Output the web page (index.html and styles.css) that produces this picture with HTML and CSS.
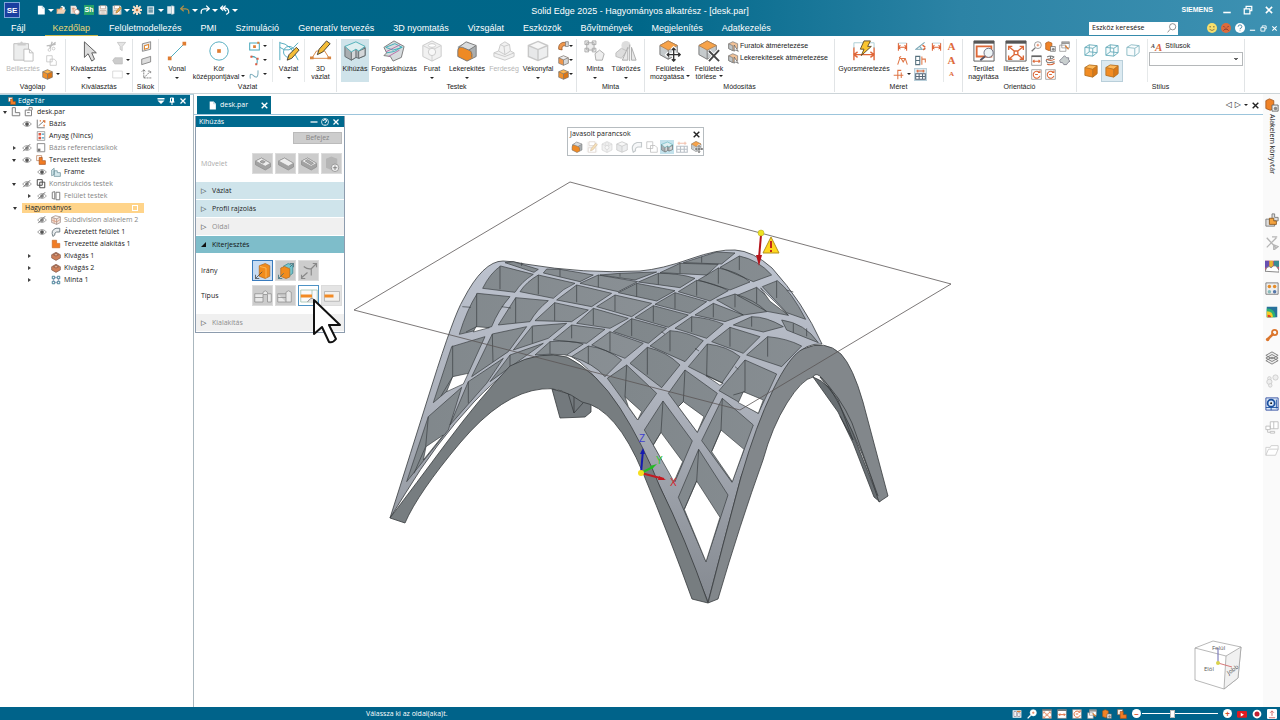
FILE: index.html
```html
<!DOCTYPE html>
<html lang="hu">
<head>
<meta charset="utf-8">
<title>Solid Edge 2025 - Hagyományos alkatrész - [desk.par]</title>
<link rel="stylesheet" href="styles.css">
</head>
<body>
<svg class="defs" aria-hidden="true">
<symbol id="cube" viewBox="0 0 16 16"><path d="M8 1l7 3v8l-7 3-7-3V4z" class="f2"/><path d="M8 1l7 3-7 3-7-3z" class="f1"/><path d="M8 7l7-3v8l-7 3z" class="f3"/><path d="M8 1l7 3v8l-7 3-7-3V4zM1 4l7 3 7-3M8 7v8" class="ln"/></symbol>
<symbol id="hole" viewBox="0 0 24 24"><path d="M12 1l10 5v12l-10 5-10-5V6z" fill="#ddd" stroke="#777"/><path d="M2 6l10 5 10-5M12 11v12" fill="none" stroke="#888"/><ellipse cx="12" cy="6" rx="4" ry="2" fill="#fff" stroke="#777"/><circle cx="12" cy="13" r="4" fill="#eee" stroke="#777"/></symbol>
<symbol id="draft" viewBox="0 0 24 24"><path d="M1 14l5-2 2-7 5-3 5 3 1 7 4 2v4l-10 4-12-4z" fill="#ddd" stroke="#777"/><path d="M8 5l4 2 6-2M12 7l1 9M1 14l12 4 10-4M6 12l7 4 6-4" fill="none" stroke="#777"/></symbol>
<symbol id="round" viewBox="0 0 24 24"><path d="M2 7l10-5 10 5v11l-10 5-10-5z" fill="#a9aeb1"/><path d="M2 18V12q0-5 5-4l7 3q4 1 4 6v3l-6 3z" fill="#ee8a25"/><path d="M3 8l8-6 11 4-7 4q-2 1-8-2-2-1-4 0z" fill="#d9dcde"/><path d="M3 8l8-6 11 4v12l-10 5-10-5v-6q0-5 5-4l7 3q4 1 3 8M14 11l8-5" class="ln"/></symbol>
<symbol id="extr" viewBox="0 0 24 24"><path d="M1 7v11l7 4 5-3 3 1 7-3V8z" fill="#a9aeb1" stroke="#60686b"/><path d="M8 12l5-2v9l-5 3zM16 12l7-3v8l-7 3z" fill="#d4d7d9" stroke="#60686b"/><path d="M1 7l12-5 10 5-7 5-3-2-5 3z" fill="#dfeef0" stroke="#49aeb7"/></symbol>
<symbol id="revolve" viewBox="0 0 24 24"><path d="M1 8L12 1l11 6-3 12-9 4-3-5-7-1 3-3z" fill="#d6dbde" stroke="#777"/><path d="M3 8l10-4 8 4-10 3zM4 14q9 0 16-6" fill="none" stroke="#38adb8"/><path d="M6 18L18 11M3 13l16-8" fill="none" stroke="#b66aa5"/></symbol>
<symbol id="page" viewBox="0 0 16 16"><path d="M3 1h7l4 4v10H3z" fill="#fff"/><path d="M10 1v4h4" fill="none" stroke="#9bc"/></symbol>
<symbol id="folder" viewBox="0 0 16 16"><path d="M1 14V6h5l1-2h6v4" fill="#eaa978"/><path d="M1 14l3-7h12l-3 7z" fill="#f0d0b4"/><path d="M7 3q4-4 6 1l1-2v5H9l2-2Q10 2 7 3" fill="#fff"/></symbol>
<symbol id="pages" viewBox="0 0 16 16"><path d="M1 1h8l2 3v10H1z" fill="#eee4dc"/><path d="M5 4v8M3 6h5" stroke="#c87452"/><circle cx="11" cy="11" r="4" fill="#fff" stroke="#ba7861"/></symbol>
<symbol id="save" viewBox="0 0 16 16"><path d="M1 1h13l1 2v12H1z" fill="#e8e6e3"/><path d="M4 1h8v5H4zM3 9h10v6H3z" fill="#fff" stroke="#ae9787"/><path d="M5 11h6M5 13h6" stroke="#ae9787"/></symbol>
<symbol id="saveas" viewBox="0 0 16 16"><path d="M1 1h13l1 2v12H1z" fill="#e8e6e3"/><path d="M4 1h8v5H4zM3 9h10v6H3z" fill="#fff" stroke="#ae9787"/><path d="M6 13l1-3 6-7 2 2-6 7z" fill="#eeb64a" stroke="#9c6a2c"/></symbol>
<symbol id="gear" viewBox="0 0 16 16"><path d="M8 0v16M0 8h16M2 2l12 12M14 2L2 14" stroke="#f3ddc7" stroke-width="3"/><circle cx="8" cy="8" r="5" fill="#f3ddc7"/><circle cx="8" cy="8" r="2" fill="#c67741"/></symbol>
<symbol id="doc" viewBox="0 0 16 16"><path d="M2 2h11v13H2z" fill="#dce8ec"/><path d="M4 5h7M4 8h7M4 11h7" stroke="#437f96" stroke-width="2"/></symbol>
<symbol id="exit" viewBox="0 0 16 16"><path d="M2 2h7v12H2z" fill="#dce8ec"/><path d="M9 1l4 1v12l-4 1z" fill="#fff" stroke="#a8bcc4"/></symbol>
<symbol id="undo" viewBox="0 0 16 16"><path d="M6 1L1 6l5 4M1 6h8q6 0 5 8" fill="none" stroke="currentColor" stroke-width="2"/></symbol>
<symbol id="undo2" viewBox="0 0 16 16"><path d="M5 1L1 5l4 4M1 5h8q5 1 5 7l-4 3M9 1L5 5l5 5" fill="none" stroke="currentColor" stroke-width="2"/></symbol>
<symbol id="paste" viewBox="0 0 24 24"><path d="M2 4h16v18H2z" fill="#eceded" stroke="#bbb"/><path d="M6 5V3h3q1-3 3 0h3v3H6z" fill="#ccc"/><path d="M13 10h6l4 4v9H13z" fill="#fff" stroke="#bbb"/><path d="M19 10v4h4" fill="none" stroke="#bbb"/></symbol>
<symbol id="cut" viewBox="0 0 16 16"><path d="M9 1L6 11M1 7l13-2M14 2L5 9" stroke="#bbb" stroke-width="2"/><circle cx="5" cy="13" r="2" fill="none" stroke="#bbb"/><circle cx="11" cy="11" r="2" fill="none" stroke="#bbb"/></symbol>
<symbol id="copy" viewBox="0 0 16 16"><path d="M1 1h8v9H1zM6 6h6l3 3v6H6z" fill="#fff" stroke="#bbb"/></symbol>
<symbol id="arrow" viewBox="0 0 24 24"><path d="M7 2v17l4-4 4 8 3-2-3-7h5z" fill="#ddd" stroke="#555"/></symbol>
<symbol id="funnel" viewBox="0 0 16 16"><path d="M2 2h12l-5 6v6l-3-2V8z" fill="#e4e4e4" stroke="#bbb"/></symbol>
<symbol id="tag" viewBox="0 0 16 16"><path d="M1 8l3-4h11v9H4z" fill="#ccc" stroke="#bbb"/></symbol>
<symbol id="rect" viewBox="0 0 16 16"><path d="M1 3h14v10H1z" fill="#fff" stroke="#ccc"/></symbol>
<symbol id="planeO" viewBox="0 0 16 16"><path d="M2 4l12-3v11L2 15z" fill="#e8e8e8" stroke="#666"/><path d="M5 7l6-2v5l-6 2z" fill="#fff" stroke="#df8730" stroke-width="1.5"/></symbol>
<symbol id="plane" viewBox="0 0 16 16"><path d="M1 14V6l13-4v8z" fill="#ddd" stroke="#666"/></symbol>
<symbol id="axes" viewBox="0 0 16 16"><path d="M4 1v12h11M4 13l9-9M1 4l3-3 3 3M10 3h4v4" fill="none" stroke="#555" stroke-dasharray="3 1"/></symbol>
<symbol id="line" viewBox="0 0 24 24"><path d="M3 21L21 3" stroke="#3fa5ba"/><path d="M2 18h4v4H2zM18 2h4v4h-4z" fill="#df7d32"/></symbol>
<symbol id="circle" viewBox="0 0 24 24"><circle cx="12" cy="12" r="10" fill="#fff" stroke="#4ba9bc"/><path d="M10 10h4v4h-4z" fill="#df7d32"/></symbol>
<symbol id="sqdot" viewBox="0 0 16 16"><path d="M1 3h14v10H1z" fill="none" stroke="#4ba9bc" stroke-width="1.5"/><path d="M6 6h4v4H6zM12 1h3v3h-3z" fill="#df7d32"/></symbol>
<symbol id="arc" viewBox="0 0 16 16"><path d="M3 2q12 0 8 12" fill="none" stroke="#4ba9bc" stroke-width="1.5"/><path d="M2 1h3v3H2zM9 12h3v3H9zM11 4h3v3h-3z" fill="#df5d42"/></symbol>
<symbol id="curve" viewBox="0 0 16 16"><path d="M2 14q-2-10 5-4t6-8" fill="none" stroke="#7badbc" stroke-width="1.5"/></symbol>
<symbol id="sketch" viewBox="0 0 24 24"><path d="M2 2v20M2 3q12 1 20 19M2 8q10 8 20-5" fill="none" stroke="#4ba9bc"/><circle cx="12" cy="13" r="6" fill="none" stroke="#4ba9bc"/><path d="M10 22l2-6 8-8 3 3-8 9z" fill="#f4bd38" stroke="#423b2e"/></symbol>
<symbol id="sketch3" viewBox="0 0 24 24"><path d="M2 20l5-8h9l5 8z" fill="none" stroke="#d68440"/><path d="M8 16l2-6 8-9 4 3-8 9z" fill="#f4bd38" stroke="#423b2e"/><path d="M0 18h4v3H0zM19 18h4v3h-4z" fill="#d68440"/></symbol>
<symbol id="loft" viewBox="0 0 16 16"><path d="M1 12q-1-8 6-10h5v5H9q-4 0-3 6z" fill="#ef974c" stroke="#864415"/><path d="M11 1h4v7h-4z" fill="#ddd" stroke="#777"/></symbol>
<symbol id="pattern" viewBox="0 0 24 24"><path d="M3 3h8v8H3zM1 1h4v4H1zM9 1h4v4H9zM1 9h4v4H1zM9 9h4v4H9zM17 11l5 4-2 7h-7l-1-7z" fill="#eee" stroke="#aaa"/></symbol>
<symbol id="mirror" viewBox="0 0 24 24"><circle cx="12" cy="6" r="5" fill="#ddd"/><path d="M1 14l6-5 6 3-6 8-6-2z" fill="#ddd" stroke="#bbb"/><path d="M16 5v18M14 8l-6 14h6zM18 8l5 14h-5z" fill="#e8e8e8" stroke="#aaa"/></symbol>
<symbol id="cubemove" viewBox="0 0 24 24"><path d="M1 6l9-5 10 5v10l-10 5-9-5z" fill="#c5cacc" stroke="#777"/><path d="M1 6l9-5 10 5-10 5z" fill="#f7a34a" stroke="#b9824b"/><path d="M10 11v10" stroke="#777"/><path d="M16 9v14M9 16h14M14 11l2-2 2 2M14 21l2 2 2-2M11 14l-2 2 2 2M21 14l2 2-2 2" fill="none" stroke="#fff" stroke-width="4"/><path d="M16 9v14M9 16h14M14 11l2-2 2 2M14 21l2 2 2-2M11 14l-2 2 2 2M21 14l2 2-2 2" fill="none" stroke="#333" stroke-width="1.5"/></symbol>
<symbol id="cubedel" viewBox="0 0 24 24"><path d="M1 6l9-5 10 5v10l-10 5-9-5z" fill="#c5cacc" stroke="#777"/><path d="M1 6l9-5 10 5-10 5z" fill="#f7a34a" stroke="#b9824b"/><path d="M10 11v10" stroke="#777"/><path d="M12 12l11 11M23 11L12 23" stroke="#fff" stroke-width="4"/><path d="M12 12l11 11M23 11L12 23" stroke="#444" stroke-width="2"/></symbol>
<symbol id="cubesize" viewBox="0 0 16 16"><path d="M1 4l6-3 7 3v7l-7 3-6-3z" fill="#f0c197" stroke="#777"/><path d="M1 4l6 3v7l-6-3z" fill="#bfc4c6" stroke="#777"/><path d="M9 6v9l2-2 4 2z" fill="#fff" stroke="#555"/></symbol>
<symbol id="dim" viewBox="0 0 24 24"><path d="M1 8v14M23 8v14M1 16h22M5 13l-4 3 4 3M19 13l4 3-4 3" fill="none" stroke="#df6537" stroke-width="1.5"/><path d="M1 9V3h22v6" fill="none" stroke="#a8ccd2"/><path d="M12 1h7l-3 6h4L9 17l3-7H8z" fill="#fbc52f" stroke="#604a26"/></symbol>
<symbol id="dimS" viewBox="0 0 16 16"><path d="M2 3v11M14 3v11M2 9h12M5 6L2 9l3 3M11 6l3 3-3 3" fill="none" stroke="#df6537" stroke-width="1.5"/><path d="M2 3h12" stroke="#9bc3ce"/></symbol>
<symbol id="angle" viewBox="0 0 16 16"><path d="M14 2L1 12h14M6 8q4 1 3 5" fill="none" stroke="#78a6b5" stroke-width="1.5"/><path d="M11 6l4 3M12 13l3-3" stroke="#df6537" stroke-width="2"/></symbol>
<symbol id="angle2" viewBox="0 0 16 16"><path d="M1 14L4 5l8 0 3 9M3 4l3-2M6 5l3 5 3-5" fill="none" stroke="#df7545" stroke-width="1.5"/></symbol>
<symbol id="ord" viewBox="0 0 16 16"><path d="M1 9h14M7 9V2h5M7 9v6M12 5v8" fill="none" stroke="#df7545" stroke-width="1.5"/></symbol>
<symbol id="hdim" viewBox="0 0 16 16"><path d="M1 2h6v12H1zM1 8h6" fill="none" stroke="#56707e" stroke-width="1.5"/><path d="M10 2v12M10 6h5v5" fill="none" stroke="#df7545" stroke-width="1.5"/></symbol>
<symbol id="table" viewBox="0 0 16 16"><path d="M1 7h14v8H1zM6 7v8M11 7v8M1 11h14" fill="#fff" stroke="#567" stroke-width="1.5"/><path d="M2 3h12M4 1v4M12 1v4" stroke="#df6537" stroke-width="1.5"/></symbol>
<symbol id="frame" viewBox="0 0 24 24"><path d="M1 1h22v22H1z" fill="#fff" stroke="#555"/><path d="M1 1h22v3H1z" fill="#555"/><path d="M4 7h16v11H4z" fill="none" stroke="#dd6837" stroke-width="2"/><circle cx="17" cy="14" r="5" fill="#edf4f6" stroke="#667"/><path d="M13 18l-5 4" stroke="#556" stroke-width="2"/></symbol>
<symbol id="fit" viewBox="0 0 24 24"><path d="M1 1h22v22H1z" fill="#fff" stroke="#555"/><path d="M1 1h22v3H1z" fill="#555"/><path d="M4 11V7h4M16 7h4v4M4 17v4h4M20 17v4h-4M4 7l6 5M20 7l-6 5M4 21l6-5M20 21l-6-5M10 12h4v4h-4z" fill="none" stroke="#dd6837" stroke-width="1.5"/></symbol>
<symbol id="lens" viewBox="0 0 16 16"><circle cx="10" cy="6" r="5" fill="#fff" stroke="currentColor"/><path d="M6 10l-5 5" stroke="currentColor" stroke-width="2"/><path d="M8 6h4M10 4v4" class="orange"/></symbol>
<symbol id="search" viewBox="0 0 16 16"><circle cx="9" cy="6" r="5" fill="none" stroke="#555"/><path d="M5 10l-4 5" stroke="#555"/></symbol>
<symbol id="win" viewBox="0 0 16 16"><path d="M1 1h14v14H1z" fill="#fff" stroke="#777"/><path d="M1 2h14" stroke="#666" stroke-width="2"/><path d="M3 9h10M5 7L3 9l2 2M11 7l2 2-2 2" fill="none" stroke="#dd6837" stroke-width="1.5"/></symbol>
<symbol id="spin" viewBox="0 0 16 16"><path d="M3 3q5-3 10 0-2 3-7 3t-4 3 6 2 6-1M8 1v4" fill="none" stroke="#777" stroke-width="1.5"/><path d="M2 6q6 4 12 0M3 13q5 3 11-1" fill="none" stroke="#d9683b" stroke-width="1.5"/></symbol>
<symbol id="pan" viewBox="0 0 16 16"><path d="M8 1l3 3h3v3l2 2-3 2-2 3H7l-2-3H2L1 8l3-3z" fill="#c9cfcf" stroke="#667"/></symbol>
<symbol id="rot" viewBox="0 0 16 16"><path d="M1 1h14v14H1z" fill="#fff" stroke="#888"/><path d="M12 5a5 5 0 1 0 1 5M10 5h3V2M6 8h4" fill="none" stroke="#dd6837" stroke-width="1.5"/></symbol>
<symbol id="wins" viewBox="0 0 16 16"><path d="M4 1h11v9H4zM1 6h9v9H1z" fill="#fff" stroke="#888"/><path d="M4 3h11" stroke="#777" stroke-width="2"/><path d="M9 7l5 5" stroke="#dd8037" stroke-width="2"/></symbol>
<symbol id="split" viewBox="0 0 16 16"><path d="M1 2h14v12H1z" fill="#fff"/><path d="M3 4h4v8H3zM9 6h4v6H9z" fill="none" stroke="#778"/><path d="M8 4h6" stroke="#dd8037" stroke-width="2"/></symbol>
<symbol id="wire" viewBox="0 0 16 16"><path d="M1 5l5-3 9 1v8l-5 4-9-1zM1 5l9 1 5-3M10 6v9" fill="#f8fcfd" stroke="#87b8c4"/></symbol>
<symbol id="wire2" viewBox="0 0 16 16"><path d="M1 5l5-3 9 1v8l-5 4-9-1zM1 5l9 1 5-3M10 6v9M6 2v8l9 1M1 14l5-4" fill="#f5fbfc" stroke="#62a9b8"/></symbol>
<symbol id="solid" viewBox="0 0 16 16"><path d="M1 4l5-3 9 1v9l-5 4-9-2z" fill="#f28c22"/><path d="M1 4l5-3 9 1-5 4z" fill="#ffb959"/><path d="M10 6l5-4v9l-5 4z" fill="#dc7915"/><path class="rim" d="M1 4l5-3 9 1v9l-5 4-9-2zM1 4l9 2 5-4M10 6v9" fill="none"/></symbol>
<symbol id="eye" viewBox="0 0 16 16"><path d="M1 8q7-8 14 0-7 8-14 0z" fill="#fff" stroke="#666"/><circle cx="8" cy="8" r="3" fill="#555"/></symbol>
<symbol id="hid" viewBox="0 0 16 16"><path d="M1 8q7-8 14 0-7 8-14 0z" fill="#fff" stroke="#777"/><circle cx="8" cy="8" r="3" fill="#888"/><path d="M2 13L13 2" stroke="#666" stroke-width="1.5"/></symbol>
<symbol id="part" viewBox="0 0 16 16"><path d="M2 1h5v8h7v5H2z" fill="#fafafa" stroke="#777" stroke-width="1.5"/></symbol>
<symbol id="lockpart" viewBox="0 0 16 16"><path d="M2 5h10v9H2zM8 5V1h5v4M5 9h4" fill="#fff" stroke="#777" stroke-width="1.5"/></symbol>
<symbol id="base" viewBox="0 0 16 16"><path d="M2 1v13h12M4 11l9-8" fill="none" stroke="#777" stroke-width="1.5"/><path d="M6 3h2M11 3h3v3M13 9v3" stroke="#df7130" stroke-width="2" fill="none"/></symbol>
<symbol id="mat" viewBox="0 0 16 16"><path d="M2 1h12v14H2z" fill="#fff" stroke="#777"/><path d="M4 3h4v4H4zM4 9h4v4H4z" fill="#df5640"/><path d="M9 5h4M9 11h4" stroke="#499bc0" stroke-width="2"/></symbol>
<symbol id="refpl" viewBox="0 0 16 16"><path d="M2 1h12v13H2z" fill="#fff" stroke="#888" stroke-width="1.5"/><path d="M3 9h4v4H3z" fill="#777"/></symbol>
<symbol id="bodies" viewBox="0 0 16 16"><path d="M1 1h8v8H1z" fill="#fff" stroke="#ac673d"/><path d="M5 4h5v5h5v6H5z" fill="#f17c24" stroke="#9f4c1c"/></symbol>
<symbol id="library" viewBox="0 0 16 16"><path d="M1 3l4-2 5 2v9l-4 2-5-2z" fill="#f08327" stroke="#a8581c"/><path d="M8 8h7v7H8z" fill="#eee" stroke="#666"/><circle cx="12" cy="12" r="2" fill="#888"/></symbol>
<symbol id="orangeL" viewBox="0 0 16 16"><path d="M2 2h7v5h5v7H2z" fill="#f17c24" stroke="#c5641f"/></symbol>
<symbol id="body" viewBox="0 0 16 16"><path d="M1 5l4-3v10l-4 2zM5 6h5v3h5v6H5z" fill="#d4e8ed" stroke="#58818c"/></symbol>
<symbol id="cbody" viewBox="0 0 16 16"><path d="M2 1h8v9H2zM6 5h8v9H6z" fill="#fff" stroke="#444" stroke-width="1.5"/></symbol>
<symbol id="surf" viewBox="0 0 16 16"><path d="M2 2l4-1v12l-4-1zM8 2h6v12H8z" fill="#fff" stroke="#777" stroke-width="1.5"/></symbol>
<symbol id="sweep" viewBox="0 0 16 16"><path d="M3 15q-4-10 5-13h6v6H9q-4 1-3 5z" fill="#e9edef" stroke="#6e7b81" stroke-width="1.5"/></symbol>
<symbol id="subdiv" viewBox="0 0 16 16"><path d="M1 4l6-3 8 2v9l-6 3-8-3zM1 4l8 2 6-3M9 6v9" fill="#f4e4dc" stroke="#8d7c76"/><path d="M5 5v8M1 8l8 3 6-4" fill="none" stroke="#cf8a6a"/></symbol>
<symbol id="cutout" viewBox="0 0 16 16"><path d="M1 6l7-4 7 4v5l-7 4-7-4z" fill="#ce805a" stroke="#765447"/><path d="M4 6l4-2 4 2-4 2z" fill="#f3b99b" stroke="#70483a"/></symbol>
<symbol id="pat4" viewBox="0 0 16 16"><path d="M4 4h8v8H4z" fill="none" stroke="#87a"/><path d="M2 2h4v4H2zM10 2h4v4h-4zM2 10h4v4H2zM10 10h4v4h-4z" fill="#eef8fb" stroke="#427e94" stroke-width="1.5"/></symbol>
<symbol id="slab" viewBox="0 0 24 24"><path d="M2 8l8-4 12 7v5l-7 4L2 13z" fill="#a2a2a2" stroke="#8d8d8d"/><path d="M2 8l8-4 12 7-7 4z" fill="#ededed" stroke="#999"/></symbol>
<symbol id="dir1" viewBox="0 0 24 24"><path d="M7 5l8-3 6 3v14l-6 3-8-3z" fill="#f28c1d" stroke="#b56c20"/><path d="M8 6l8 2v13" fill="none" stroke="#ffc46b"/><path d="M11 13l-9 9M2 17v5h5" fill="none" stroke="#444"/></symbol>
<symbol id="dir2" viewBox="0 0 24 24"><path d="M8 6l7-4 6 3v10l-5 4" fill="#75c5ce" stroke="#36848f"/><path d="M5 8l5-2 7 3v11l-5 2-7-3z" fill="#f28c1d" stroke="#b56c20"/><path d="M9 15l-7 7M2 17v5h5M17 7l5-5M17 2h5v5" fill="none" stroke="#356b77"/></symbol>
<symbol id="dir3" viewBox="0 0 24 24"><path d="M5 6q5 4 10 3M15 9l7-7M17 2h5v5M15 9v9M10 14l-8 7M2 17v5h5" fill="none" stroke="#888" stroke-width="1.5"/></symbol>
<symbol id="typ1" viewBox="0 0 24 24"><path d="M1 9h11V7q3-4 6 0v2h5v11h-5V10h-6v10H1z" fill="#e9e9e9" stroke="#8c8c8c"/><path d="M1 14h11" stroke="#8c8c8c"/></symbol>
<symbol id="typ2" viewBox="0 0 24 24"><path d="M1 9h11V7q3-4 7 0v13h-7V9M1 9v11h11M1 14h11" fill="#e9e9e9" stroke="#8c8c8c"/></symbol>
<symbol id="typ3" viewBox="0 0 24 24"><path d="M1 4h22v16H1zM16 4v16" fill="#fafafa" stroke="#9ba"/><path d="M1 10h15v4H1z" fill="#f28b25"/><path d="M10 20q5-8 9-3v3" fill="#ddd" stroke="#777"/></symbol>
<symbol id="typ4" viewBox="0 0 24 24"><path d="M2 6h20v13H2z" fill="#f3f1ed" stroke="#aaa"/><path d="M2 10h12v4H2z" fill="#f28b25"/></symbol>
<symbol id="help" viewBox="0 0 16 16"><circle cx="8" cy="8" r="7" fill="none" stroke="#fff" stroke-width="1.5"/><path d="M5 6q0-3 3-3t3 3q0 2-3 3v1M8 12v1" fill="none" stroke="#fff" stroke-width="2"/></symbol>
<symbol id="helpw" viewBox="0 0 16 16"><circle cx="8" cy="8" r="8" fill="#fff"/><path d="M5 6q0-3 3-3t3 3q0 2-3 3v1M8 12v1" fill="none" stroke="#4886a4" stroke-width="1.5"/></symbol>
<symbol id="x" viewBox="0 0 16 16"><path d="M3 3l10 10M13 3L3 13" stroke="currentColor" stroke-width="2.5"/></symbol>
<symbol id="min" viewBox="0 0 16 16"><path d="M2 12h12" stroke="currentColor" stroke-width="2.5"/></symbol>
<symbol id="dash" viewBox="0 0 16 16"><path d="M1 8h14" stroke="currentColor" stroke-width="2.5"/></symbol>
<symbol id="restore" viewBox="0 0 16 16"><path d="M5 5V2h9v7h-3M2 6h9v8H2z" fill="none" stroke="currentColor" stroke-width="2"/></symbol>
<symbol id="pin" viewBox="0 0 16 16"><path d="M3 10h10M5 2h6v8H5zM9 2v8M8 10v6" fill="none" stroke="#fff" stroke-width="2"/></symbol>
<symbol id="drop" viewBox="0 0 16 16"><path d="M1 2h14v3H1zM1 7h14l-7 7z" fill="#fff"/></symbol>
<symbol id="smile" viewBox="0 0 16 16"><circle cx="8" cy="8" r="8"/><path d="M5 5v2M11 5v2" stroke="#543" stroke-width="1.5"/><path d="M4 10q4 4 8 0" fill="none" stroke="#543"/></symbol>
<symbol id="frown" viewBox="0 0 16 16"><circle cx="8" cy="8" r="8"/><path d="M4 5l2 2M12 5l-2 2M4 12q4-5 8 0" fill="none" stroke="#733" stroke-width="1.5"/></symbol>
<symbol id="tools" viewBox="0 0 16 16"><path d="M2 2l11 12M13 2L2 13M8 1h6M10 10l5 2-5 4z" fill="#eee" stroke="#b5b5b5" stroke-width="1.5"/></symbol>
<symbol id="asm" viewBox="0 0 16 16"><path d="M1 7h5v5h5v3H1zM8 1h3v4h4v4H8z" fill="#ddd" stroke="#777"/><path d="M5 6h5v3h3v4H5z" fill="#f3a23e" stroke="#8a5a22"/></symbol>
<symbol id="scene" viewBox="0 0 16 16"><path d="M0 2h16v11H0z" fill="#d94f70"/><path d="M0 2h5v8H0z" fill="#684fb0"/><path d="M10 2h6v7h-6z" fill="#3a8c92"/><path d="M5 2h4v7H5z" fill="#e6b52e"/><path d="M0 14q3-8 7-4 5-6 9 3v2z" fill="#fff" stroke="#777"/></symbol>
<symbol id="panel4" viewBox="0 0 16 16"><path d="M1 1h14v13H1z" fill="#eee" stroke="#777"/><circle cx="5" cy="5" r="2" fill="#e58c28"/><circle cx="11" cy="5" r="2" fill="#e58c28"/><circle cx="5" cy="11" r="2" fill="#8bb"/><circle cx="11" cy="11" r="2" fill="#57a"/></symbol>
<symbol id="heat" viewBox="0 0 16 16"><path d="M2 2h12v12H2z" fill="#27719b"/><path d="M2 4q10 0 10 10H2z" fill="#2cb176"/><path d="M2 7q7 0 7 7H2z" fill="#f3cf29"/><path d="M3 11q4 0 4 3H3z" fill="#df4127"/></symbol>
<symbol id="wrench" viewBox="0 0 16 16"><path d="M3 13L10 6" stroke="#db762e" stroke-width="3"/><circle cx="11" cy="5" r="3" fill="none" stroke="#db762e" stroke-width="2"/><circle cx="3" cy="13" r="2" fill="#db762e"/></symbol>
<symbol id="layers" viewBox="0 0 16 16"><path d="M1 11l7-4 7 4-7 4zM1 8l7-4 7 4-7 4zM1 5l7-4 7 4-7 4z" fill="#eee" stroke="#777"/></symbol>
<symbol id="balls" viewBox="0 0 16 16"><g fill="#eee" stroke="#ccc"><circle cx="5" cy="5" r="2"/><circle cx="5" cy="9" r="3"/><circle cx="6" cy="13" r="2"/><circle cx="12" cy="4" r="3"/></g></symbol>
<symbol id="target" viewBox="0 0 16 16"><path d="M1 1h14v14H1z" fill="#dbe8f7" stroke="#304ba0"/><circle cx="7" cy="7" r="4" fill="none" stroke="#1a50a0" stroke-width="2"/><circle cx="7" cy="7" r="1"/><path d="M7 11v4M1 12h14M13 3v10" stroke="#1a50a0"/></symbol>
<symbol id="net" viewBox="0 0 16 16"><path d="M6 2h9v8H6zM1 7h5v4H1zM6 13h5v2H6zM10 2v8M3 11v3h3" fill="#fff" stroke="#bbb"/></symbol>
<symbol id="openf" viewBox="0 0 16 16"><path d="M1 14V5h5l1-2h8v4M1 14l3-7h11l-3 7z" fill="#fff" stroke="#ccc"/></symbol>
</svg>

<div class="app">
<header class="top">
  <div class="titlebar">
    <div class="quick">
      <b class="logo">SE</b>
      <svg class="qi"><use href="#page"/></svg><i class="dd"></i>
      <svg class="qi"><use href="#folder"/></svg><svg class="qi"><use href="#pages"/></svg>
      <b class="sh">Sh</b>
      <svg class="qi"><use href="#save"/></svg><svg class="qi"><use href="#saveas"/></svg><i class="dd"></i>
      <svg class="qi"><use href="#gear"/></svg><svg class="qi"><use href="#doc"/></svg><i class="dd"></i>
      <svg class="qi"><use href="#exit"/></svg>
      <svg class="qi gold"><use href="#undo"/></svg><i class="dd"></i>
      <svg class="qi flip"><use href="#undo"/></svg><i class="dd"></i>
      <svg class="qi"><use href="#undo2"/></svg><i class="dd"></i>
    </div>
    <h1>Solid Edge 2025 - Hagyományos alkatrész - [desk.par]</h1>
    <div class="wctl"><b class="siemens">SIEMENS</b><svg class="qi"><use href="#min"/></svg><svg class="qi"><use href="#restore"/></svg><svg class="qi"><use href="#x"/></svg></div>
  </div>
  <div class="tabbar">
    <nav class="tabs">
      <button class="file">Fájl</button><button class="on">Kezdőlap</button><button>Felületmodellezés</button><button>PMI</button><button>Szimuláció</button><button>Generatív tervezés</button><button>3D nyomtatás</button><button>Vizsgálat</button><button>Eszközök</button><button>Bővítmények</button><button>Megjelenítés</button><button>Adatkezelés</button>
    </nav>
    <label class="search"><input type="text" aria-label="Eszköz keresése" placeholder="Eszköz keresése"><svg class="qi"><use href="#search"/></svg></label>
    <div class="faces"><svg class="qi yellow"><use href="#smile"/></svg><svg class="qi red"><use href="#frown"/></svg><svg class="qi"><use href="#helpw"/></svg><svg class="tiny"><use href="#min"/></svg><svg class="tiny"><use href="#restore"/></svg><svg class="tiny"><use href="#x"/></svg></div>
  </div>
</header>

<div class="ribbon">
  <section class="group clip"><div class="body">
    <button class="big off"><svg><use href="#paste"/></svg><span>Beillesztés</span></button>
    <div class="col"><svg><use href="#cut"/></svg><svg><use href="#copy"/></svg><span class="pair"><svg class="or"><use href="#cube"/></svg><i class="dd"></i></span></div>
  </div><h2>Vágólap</h2></section>
  <section class="group select"><div class="body">
    <button class="big"><svg><use href="#arrow"/></svg><span>Kiválasztás</span><i class="dd"></i></button>
    <div class="col"><svg><use href="#funnel"/></svg><span class="pair"><svg><use href="#tag"/></svg><i class="dd"></i></span><span class="pair"><svg><use href="#rect"/></svg><i class="dd"></i></span></div>
  </div><h2>Kiválasztás</h2></section>
  <section class="group planes"><div class="body">
    <div class="col"><svg><use href="#planeO"/></svg><svg><use href="#plane"/></svg><svg><use href="#axes"/></svg></div>
  </div><h2>Síkok</h2></section>
  <section class="group sketch"><div class="body">
    <button class="big"><svg><use href="#line"/></svg><span>Vonal</span><i class="dd"></i></button>
    <button class="big"><svg><use href="#circle"/></svg><span>Kör<br>középpontjával<i class="dd in"></i></span></button>
    <div class="col"><span class="pair"><svg><use href="#sqdot"/></svg><i class="dd"></i></span><span class="pair"><svg><use href="#arc"/></svg><i class="dd"></i></span><span class="pair"><svg><use href="#curve"/></svg><i class="dd"></i></span></div>
    <button class="big sep"><svg><use href="#sketch"/></svg><span>Vázlat</span><i class="dd"></i></button>
    <button class="big sep"><svg><use href="#sketch3"/></svg><span>3D<br>vázlat</span></button>
  </div><h2>Vázlat</h2></section>
  <section class="group solids"><div class="body">
    <button class="big active"><svg><use href="#extr"/></svg><span>Kihúzás</span></button>
    <button class="big"><svg><use href="#revolve"/></svg><span>Forgáskihúzás</span></button>
    <button class="big"><svg class="fade"><use href="#hole"/></svg><span>Furat</span><i class="dd"></i></button>
    <button class="big"><svg><use href="#round"/></svg><span>Lekerekítés</span><i class="dd"></i></button>
    <button class="big off"><svg class="fade"><use href="#draft"/></svg><span>Ferdeség</span></button>
    <button class="big"><svg class="fade"><use href="#cube"/></svg><span>Vékonyfal</span><i class="dd"></i></button>
    <div class="col"><span class="pair tight"><svg><use href="#loft"/></svg><i class="dd"></i></span><span class="pair tight"><svg class="mid"><use href="#cube"/></svg><i class="dd"></i></span><span class="pair tight"><svg class="or"><use href="#cube"/></svg><i class="dd"></i></span></div>
  </div><h2>Testek</h2></section>
  <section class="group patt"><div class="body">
    <button class="big"><svg><use href="#pattern"/></svg><span>Minta</span><i class="dd"></i></button>
    <button class="big"><svg><use href="#mirror"/></svg><span>Tükrözés</span><i class="dd"></i></button>
  </div><h2>Minta</h2></section>
  <section class="group modify"><div class="body">
    <button class="big"><svg><use href="#cubemove"/></svg><span>Felületek<br>mozgatása<i class="dd in"></i></span></button>
    <button class="big"><svg><use href="#cubedel"/></svg><span>Felületek<br>törlése<i class="dd in"></i></span></button>
    <div class="rows"><button><svg><use href="#cubesize"/></svg>Furatok átméretezése</button><button><svg><use href="#cubesize"/></svg>Lekerekítések átméretezése</button></div>
  </div><h2>Módosítás</h2></section>
  <section class="group dims"><div class="body">
    <button class="big"><svg class="wide"><use href="#dim"/></svg><span>Gyorsméretezés</span></button>
    <div class="icons"><svg><use href="#dimS"/></svg><svg><use href="#angle"/></svg><svg><use href="#dimS"/></svg><svg><use href="#angle2"/></svg><svg><use href="#hdim"/></svg><i></i><span class="pair"><svg><use href="#ord"/></svg><i class="dd"></i></span><svg class="picked"><use href="#table"/></svg></div>
    <div class="col aa sep"><b>A</b><b>A</b><b class="sm">A</b></div>
  </div><h2>Méret</h2></section>
  <section class="group orient"><div class="body">
    <button class="big"><svg><use href="#frame"/></svg><span>Terület<br>nagyítása</span></button>
    <button class="big"><svg><use href="#fit"/></svg><span>Illesztés</span></button>
    <div class="icons"><svg class="gray"><use href="#lens"/></svg><svg class="or"><use href="#library"/></svg><svg><use href="#wins"/></svg><svg><use href="#win"/></svg><svg><use href="#spin"/></svg><svg><use href="#pan"/></svg><svg><use href="#rot"/></svg><svg><use href="#rot"/></svg></div>
  </div><h2>Orientáció</h2></section>
  <section class="group style"><div class="body">
    <div class="shades"><svg><use href="#wire2"/></svg><svg><use href="#wire2"/></svg><svg><use href="#wire"/></svg><svg><use href="#solid"/></svg><svg class="picked"><use href="#solid"/></svg></div>
    <div class="styles sep"><label for="sty"><b><small>A</small>A</b>Stílusok</label><select id="sty"><option></option></select></div>
  </div><h2>Stílus</h2></section>
</div>

<main class="work">
  <aside class="tree">
    <header class="bar"><svg><use href="#bodies"/></svg><h2>EdgeTár</h2><svg><use href="#drop"/></svg><svg><use href="#pin"/></svg><svg><use href="#x"/></svg></header>
    <ul>
      <li class="l0"><i class="tri dn"></i><svg><use href="#part"/></svg><svg><use href="#lockpart"/></svg><span>desk.par</span></li>
      <li><i></i><svg><use href="#eye"/></svg><svg><use href="#base"/></svg><span>Bázis</span></li>
      <li><i></i><i></i><svg><use href="#mat"/></svg><span>Anyag (Nincs)</span></li>
      <li class="dim"><i class="tri"></i><svg><use href="#hid"/></svg><svg><use href="#refpl"/></svg><span>Bázis referenciasíkok</span></li>
      <li><i class="tri dn"></i><svg><use href="#eye"/></svg><svg><use href="#bodies"/></svg><span>Tervezett testek</span></li>
      <li class="l2"><i></i><svg><use href="#eye"/></svg><svg><use href="#body"/></svg><span>Frame</span></li>
      <li class="dim"><i class="tri dn"></i><svg><use href="#hid"/></svg><svg><use href="#cbody"/></svg><span>Konstrukciós testek</span></li>
      <li class="l2 dim"><i class="tri"></i><svg><use href="#hid"/></svg><svg><use href="#surf"/></svg><span>Felület testek</span></li>
      <li class="mode"><i class="tri dn"></i><b>Hagyományos<i class="box"></i></b></li>
      <li class="l2 dim"><i></i><svg><use href="#hid"/></svg><svg><use href="#subdiv"/></svg><span>Subdivision alakelem 2</span></li>
      <li class="l2"><i></i><svg><use href="#eye"/></svg><svg><use href="#sweep"/></svg><span>Átvezetett felület 1</span></li>
      <li class="l2"><i></i><i></i><svg><use href="#orangeL"/></svg><span>Tervezetté alakítás 1</span></li>
      <li class="l2"><i class="tri"></i><i></i><svg><use href="#cutout"/></svg><span>Kivágás 1</span></li>
      <li class="l2"><i class="tri"></i><i></i><svg><use href="#cutout"/></svg><span>Kivágás 2</span></li>
      <li class="l2"><i class="tri"></i><i></i><svg><use href="#pat4"/></svg><span>Minta 1</span></li>
    </ul>
  </aside>

  <section class="docarea">
    <div class="doctabs"><button class="doctab"><svg><use href="#page"/></svg><span>desk.par</span><svg><use href="#x"/></svg></button>
      <div class="docnav"><span>◁</span><span>▷</span><i class="dd"></i><svg><use href="#x"/></svg></div></div>
    <div class="canvas">
      <svg class="model" viewBox="194 115 1069 591" preserveAspectRatio="xMinYMin meet" role="img" aria-label="Frame">
        <defs>
          <linearGradient id="top" gradientUnits="userSpaceOnUse" x1="0" y1="260" x2="0" y2="600"><stop offset="0" stop-color="#bcc2ce"/><stop offset=".4" stop-color="#aeb3bd"/><stop offset="1" stop-color="#858a91"/></linearGradient>
          <linearGradient id="wall" gradientUnits="userSpaceOnUse" x1="0" y1="0" x2="900" y2="0"><stop offset="0" stop-color="#7f868a"/><stop offset="1" stop-color="#8b9196"/></linearGradient>
        </defs>
        <g class="edge">
          <path fill="#73797d" d="M552 389L591 400 591 412 585 417 560 418z"/><path fill="none" d="M568 393L574 413 583 403M574 396V413"/>
          <path fill="#686e72" d="M813 377Q830 382 845 412L860 452 880 502 874 497 853 443 838 412z"/>
          <path fill="url(#top)" d="M390 518Q410 455 432 385T463 300Q483 261 503 261Q512 261 525 264Q585 274 640 271Q662 269 690 259T735 250Q753 251 772 268Q803 302 822 344Q805 343 795 357T778 385Q768 408 760 429L741 477 723 545 708 602 679 529 660 487 636 440 615 405Q596 375 580 362T545 356Q513 360 474 402T405 494z"/>
        </g>
        <g class="cells" transform="translate(380 230) scale(.3333)">
          <path d="M375 98L400 95 475 118 462 127zM500 117L540 118 640 135 600 155 490 129zM362 108L460 133Q425 155 405 187L308 175Q330 130 362 108zM475 135L585 160Q550 175 520 205L420 185Q440 155 475 135zM655 135L773 155 715 185 600 160zM590 165L695 190 635 230 530 210zM292 190L390 200Q355 240 335 290L238 313Q260 240 292 190zM407 203L505 212Q470 240 450 275L355 285zM524 218L625 240 575 275 465 272zM705 195L815 220 755 260 650 230zM640 235L745 265 690 295 590 280zM690 305L790 340 735 385 635 345zM575 285L675 298 620 340 520 330zM457 288L560 280 505 325 400 360zM337 312L440 290 385 365 275 440zM215 350L315 320 265 430 160 518zM510 335Q570 330 610 342L560 375Q510 370 465 375zM625 348Q680 355 725 390L675 440Q640 400 575 380zM390 375L490 340 440 376 330 455zM265 455L370 385 320 460 210 585zM145 560L245 472 205 600 80 755z"/>
          <path class="hole" d="M288 290L328 293 280 306zM218 440L265 430 250 462 200 485zM138 650L190 615 130 690z"/>
          <path class="post" d="M425 98v10M540 118v22M360 108v70M475 135v58M655 135v36M590 165v52M290 190v100l-32 16M407 203v76M524 218v54M705 195v48M640 235v50M690 305v60M575 285v40M457 290v50M337 312l2 84M218 347v93l-35 58M510 335v36M625 348v54M390 375v36M265 455v65M145 560l-8 90-35 80M247 230l26 2M365 230l28 4"/>
        </g>
        <g class="cells" transform="translate(600 220) scale(.3333)">
          <path d="M350 96L405 99 365 132 250 128 305 110zM418 108Q475 120 515 165L460 185 360 142zM532 182Q575 215 617 298L560 278 487 200zM240 130L355 133 320 165 180 158zM60 160L170 156 105 180 0 165zM355 144Q415 155 450 186L390 210 295 180zM470 202L565 286 500 274 412 226zM175 160Q240 160 285 175L240 203 115 186zM290 181Q345 190 385 212L330 243 235 215zM405 222Q465 240 500 275L430 285 350 240zM110 190L225 212 170 243 55 218zM225 218L320 245 270 280 165 253zM340 250L430 285 375 305 285 285zM160 257L265 285 205 322 105 293zM275 290Q330 295 370 312L320 355 225 325zM95 296L200 325 145 370 40 335zM210 332Q260 335 310 362L255 425 150 378zM390 322L480 350 430 400 335 365zM455 290Q500 290 550 320L490 336 400 315zM503 350Q560 355 605 378L545 440 440 405zM545 300Q615 310 655 368L560 330zM142 382Q200 395 240 435L185 503 90 430zM322 372Q380 378 420 410L365 490 265 440zM435 420L530 462 475 580 357 512zM255 450L352 520 292 637 205 520zM80 435L170 520 113 600 22 475z"/>
          <path class="hole" d="M482 204L565 285 510 244zM318 467L368 490 360 496zM430 515L490 540 475 580 415 548zM250 545L312 590 292 637 235 560zM75 530L125 575 113 600 85 560z"/>
          <path class="post" d="M305 110v18M418 108v42M530 182v52M240 130v30M60 160v10M355 143v48M470 202v48M175 160v34M290 181v46M405 222v40M110 190v40M225 218v48M340 250v42M160 257v48M275 290v46M95 296v52M210 332v62M390 322v58M455 290v30M503 350v60M142 382v82M322 372l-2 94 50 24M435 420v95l-35 10M255 450l-5 95-15 15M80 435l-5 95M580 310v28M620 325v24M560 210l20 6M185 335l10 8M285 385l12 8M405 440l10 8"/>
        </g>
        <g class="cells" transform="translate(600 400) scale(.3333)">
          <path d="M189 3L277 123 225 245 133 90zM367-5L460 75 396 247 305 122zM296 148L384 285 318 485 235 292z"/>
          <path class="hole" d="M183 97L248 185 222 245 160 135zM363 90L432 148 397 245 335 155zM290 243L360 352 318 485 253 328z"/>
          <path class="post" d="M189 3L183 97 160 135M367-5L363 90 335 155M296 148L290 243 253 328"/>
        </g>
        <g class="edge">
          <path fill="#777d80" d="M390 518Q415 485 447 442T510 366Q540 350 567 357Q597 372 620 408T660 487Q685 537 708 603L692 599Q670 538 643 473T582 402Q560 386 542 389Q502 393 460 443T405 523z"/>
          <path fill="#82878b" d="M708 603L723 545 741 477Q756 425 773 390T803 349Q825 339 841 354Q853 367 863 402L888 496 879 502Q865 455 842 410T813 377Q802 379 787 403T763 460Q740 524 718 599z"/>
          <path fill="none" d="M820 377Q840 396 852 423L878 496M820 377L838 400 853 440 840 416"/>
        </g>
        <path class="plane" d="M354 310L570 182 951 284 740 410z"/>
        <g stroke-width="2" fill="none"><path stroke="#171bb0" d="M641 473L643 450"/><path fill="#171bb0" d="M640 454l3-6 2 6z"/><path stroke="#2b2" d="M641 473L653 467"/><path fill="#2b2" d="M650 466l7-2-5 5z"/><path stroke="#c41a22" d="M641 473L664 479"/><path fill="#c41a22" d="M659 476l7 4-8 0z"/></g>
        <circle cx="641" cy="473" r="3" fill="#f6df1f"/>
        <g class="axis"><text x="639" y="442" fill="#3d3dd0">Z</text><text x="656" y="464" fill="#27c827">Y</text><text x="670" y="486" fill="#d2232b">X</text></g>
        <path d="M761 235L759 258" stroke="#b5121a" stroke-width="2"/><path d="M756 255h6l-3 11z" fill="#b5121a"/><circle cx="761" cy="233" r="3" fill="#ede321" stroke="#b0a51b" stroke-width=".5"/>
        <path d="M771 237l8 16h-16z" fill="#ffd71f" stroke="#b4911c" stroke-linejoin="round"/><path d="M771 241v7M771 250v2" stroke="#c22a18" stroke-width="2"/>
        <g stroke="#999" stroke-width=".7" fill="#fff"><path d="M1195 648L1213 641 1241 647 1238 678 1224 689 1195 680z"/><path fill="#f1f1f1" d="M1226 656L1241 647 1238 678 1224 689z"/><path fill="none" d="M1195 648L1226 656"/></g>
        <g class="facets"><text x="1204" y="671">Elöl</text><text x="1212" y="650">Felül</text><text x="1226" y="672" transform="rotate(-35 1232 669)">Jobb</text></g>
        <path d="M1218 663V648" stroke="#6868b2"/><path d="M1218 663L1232 667" stroke="#d67979"/><circle cx="1218" cy="663" r="2" fill="#dad34c"/>
      </svg>

      <div class="float panel">
        <header class="bar"><h2>Kihúzás</h2><svg><use href="#dash"/></svg><svg><use href="#help"/></svg><svg><use href="#x"/></svg></header>
        <div class="finish"><button disabled>Befejez</button></div>
        <div class="opts first"><span>Művelet</span>
          <button aria-label="Hozzáadás"><svg viewBox="0 0 24 24"><use href="#slab"/><path d="M8 9l3-2 4 2-3 2z" fill="#aaa" stroke="#888"/></svg></button>
          <button aria-label="Kivágás"><svg viewBox="0 0 24 24"><use href="#slab"/></svg></button>
          <button aria-label="Metszet"><svg viewBox="0 0 24 24"><use href="#slab"/><path d="M7 8l3-2 8 5-3 2z" fill="#aaa" stroke="#888"/></svg></button>
          <button aria-label="Új test"><svg viewBox="0 0 24 24"><path d="M4 5l7-3 8 3v12l-8 3-7-3z" fill="#b5b5b5"/><circle cx="16" cy="17" r="5" fill="#f0f0f0" stroke="#888"/><path d="M13 17h6M16 14v6" stroke="#666"/></svg></button></div>
        <button class="sec"><i class="otri">▷</i>Vázlat</button>
        <button class="sec"><i class="otri">▷</i>Profil rajzolás</button>
        <button class="sec none"><i class="otri">▷</i>Oldal</button>
        <button class="sec open"><i class="corner"></i>Kiterjesztés</button>
        <div class="opts"><span>Irány</span><button class="sel"><svg><use href="#dir1"/></svg></button><button><svg><use href="#dir2"/></svg></button><button><svg><use href="#dir3"/></svg></button></div>
        <div class="opts last"><span>Típus</span><button><svg><use href="#typ1"/></svg></button><button><svg><use href="#typ2"/></svg></button><button class="hov"><svg><use href="#typ3"/></svg></button><button class="lite"><svg><use href="#typ4"/></svg></button></div>
        <button class="sec none"><i class="otri">▷</i>Kialakítás</button>
      </div>

      <div class="float suggest">
        <header><span>Javasolt parancsok</span><button aria-label="Bezárás"><svg><use href="#x"/></svg></button></header>
        <div><svg><use href="#round"/></svg><svg class="fade"><use href="#saveas"/></svg><svg class="fade"><use href="#hole"/></svg><svg class="fade"><use href="#cube"/></svg><svg class="fade"><use href="#sweep"/></svg><svg><use href="#copy"/></svg><svg class="hl"><use href="#extr"/></svg><svg class="fade"><use href="#table"/></svg><svg><use href="#cubemove"/></svg></div>
      </div>
      <svg class="float mouse" viewBox="0 0 30 48"><path d="M2 2v34l8-7 7 15q4 1 7-3l-7-14h11z" fill="#fff" stroke="#111" stroke-width="2" stroke-linejoin="round"/></svg>
    </div>
  </section>

  <aside class="side">
    <svg><use href="#library"/></svg><span>Alakelem könyvtár</span>
    <div><svg><use href="#asm"/></svg><svg><use href="#tools"/></svg><svg><use href="#scene"/></svg><svg><use href="#panel4"/></svg><svg><use href="#heat"/></svg><svg><use href="#wrench"/></svg><svg><use href="#layers"/></svg><svg><use href="#balls"/></svg><svg><use href="#target"/></svg><svg><use href="#net"/></svg><svg><use href="#openf"/></svg></div>
  </aside>
</main>

<footer class="status"><span>Válassza ki az oldal(aka)t.</span>
  <div><svg><use href="#split"/></svg><svg><use href="#lens"/></svg><svg><use href="#fit"/></svg><svg><use href="#win"/></svg><svg><use href="#rot"/></svg><svg><use href="#wins"/></svg><svg><use href="#library"/></svg><svg><use href="#bodies"/></svg>
  <b class="pm less">−</b><input type="range" min="0" max="100" value="40" aria-label="Nagyítás"><b class="pm">+</b>
  <svg class="yt" viewBox="0 0 16 16"><rect y="3" width="16" height="11" rx="2" fill="#e11b22"/><path d="M6 6l5 3-5 3z" fill="#fff"/></svg><svg viewBox="0 0 16 16"><circle cx="8" cy="8" r="7" fill="#fff"/><circle cx="8" cy="8" r="4" fill="#c11f32"/></svg><svg viewBox="0 0 16 16"><rect width="16" height="16" rx="2" fill="#fff"/><path d="M8 11V3M5 6l3-3 3 3M3 14h10" fill="none" stroke="#d26868" stroke-width="1.5"/></svg></div>
</footer>
</div>
</body>
</html>
```
FILE: styles.css
```css
* { box-sizing: border-box; }
body { margin: 0; font: 7px/8px "Liberation Sans", Arial, sans-serif; color: #222; background: #fff; }
button { font: inherit; color: inherit; background: none; border: 0; padding: 0; }
h1, h2, ul { margin: 0; padding: 0; font: inherit; list-style: none; }
i { font-style: normal; }
svg { display: block; flex: none; }
.defs { position: absolute; width: 0; height: 0; }
.app { min-height: 100vh; display: flex; flex-direction: column; }

.ln { fill: none; stroke: #777; }
.f1 { fill: var(--a, #ececec); }
.f2 { fill: var(--b, #c4c8ca); }
.f3 { fill: var(--c, #d4d7d9); }
.orange { stroke: #dd6837; }
.or { --a: #ffb44a; --b: #f0902a; --c: #dc7614; }
.mid { --b: #ef974c; }
.fade { opacity: 0.4; }
.gray { color: #777; }
.dd { flex: none; width: 0; height: 0; border: 2px solid transparent; border-top-color: currentColor; border-bottom: 0; }
.dd.in { display: inline-block; margin-left: 2px; vertical-align: 2px; }

.top { color: #fff; background: linear-gradient(90deg, #006487 0, #006789 50%, #2c83a5 75%, #3d91b2 100%); }
.titlebar { height: 20px; display: grid; grid-template-columns: 1fr auto 1fr; align-items: center; font-size: 9px; line-height: 12px; }
.titlebar h1 { padding-top: 2px; }
.quick { display: flex; align-items: center; gap: 4px; padding-left: 4px; }
.quick .dd { margin: 0 -2px; border-width: 3px 3px 0; }
.logo { width: 16px; height: 16px; margin-right: 12px; background: #1b3fa0; border: 1px solid #7fa5d8; font-size: 8px; line-height: 15px; text-align: center; }
.sh { width: 10px; height: 10px; background: #27a368; font-size: 7px; line-height: 10px; text-align: center; }
.qi { width: 10px; height: 10px; }
.gold { color: #b1904a; }
.flip { transform: scaleX(-1); }
.wctl { display: flex; justify-content: flex-end; align-items: center; gap: 11px; padding-right: 6px; }
.siemens { margin-right: -2px; font-size: 7px; }
.tabbar { height: 16px; display: flex; align-items: center; padding-right: 2px; }
.tabs { display: flex; gap: 3px; padding-left: 3px; flex: 1; font-size: 9px; line-height: 17px; }
.tabs button { padding: 0 8px; height: 16px; white-space: nowrap; border-bottom: 1px solid transparent; }
.tabs .file { margin-right: 8px; }
.tabs .on { color: #e9d774; border-color: #c9b84d; }
.search { display: flex; align-items: center; width: 89px; height: 13px; margin-right: 29px; padding-right: 1px; background: #fff; }
.search input { flex: 1; min-width: 0; border: 0; padding: 0 3px; background: none; font: 7px/12px "Open Sans", "Noto Sans", sans-serif; }
.search input::placeholder { color: #111; opacity: 1; }
.faces { display: flex; align-items: center; gap: 4px; }
.tiny { width: 7px; height: 7px; }
.yellow { fill: #f7df6c; }
.red { fill: #dd6b3b; }

.ribbon { display: flex; height: 58px; padding: 3px 0 1px; border-bottom: 1px solid #ccd4d8; background: #fff; }
.group { flex: none; display: flex; flex-direction: column; border-right: 1px solid #e1e4e6; }
.group h2 { text-align: center; height: 10px; line-height: 9px; }
.body { flex: 1; display: grid; justify-content: start; }
.clip { width: 66px; }
.clip .body { grid-template-columns: 34px 22px; padding-left: 6px; }
.select { width: 67px; }
.select .body { grid-template-columns: 45px 20px; }
.planes { width: 26px; }
.planes .body { grid-template-columns: 26px; }
.sketch { width: 178px; }
.sketch .body { grid-template-columns: 36px 48px 29px 32px 32px; }
.solids { width: 240px; }
.solids .body { grid-template-columns: 28px 50px 26px 44px 30px 38px 16px; padding-left: 4px; }
.patt { width: 68px; }
.patt .body { grid-template-columns: 36px 26px; }
.modify { width: 190px; }
.modify .body { grid-template-columns: 50px 28px 1fr; justify-content: stretch; }
.dims { width: 128px; }
.dims .body { grid-template-columns: 58px 50px 16px; }
.orient { width: 114px; }
.orient .body { grid-template-columns: 41px 24px 44px; }
.style { width: 168px; }
.style .body { grid-template-columns: 70px 96px; }
.big { display: flex; flex-direction: column; align-items: center; white-space: nowrap; min-width: 0; text-align: center; line-height: 8px; }
.big svg { width: 22px; height: 22px; margin: 1px 0 3px; }
.big > .dd { margin-top: 4px; }
.off { color: #b5b5b5; }
.active { background: #cfe3ea; }
.sep { border-left: 1px solid #e6e9ea; }
.col { display: grid; grid-template-rows: repeat(3, 14px); justify-items: center; align-items: center; }
.col svg, .icons svg { width: 11px; height: 11px; }
.pair { display: flex; align-items: center; gap: 3px; }
.pair.tight { gap: 0; }
.rows { display: flex; flex-direction: column; align-items: flex-start; padding: 1px 0 0 5px; white-space: nowrap; }
.rows button { display: flex; align-items: center; gap: 1px; height: 12px; }
.rows svg { width: 11px; height: 11px; }
.icons { display: grid; grid-template: repeat(3, 14px) / repeat(3, 14px); justify-content: center; place-items: center; }
.dims .icons { grid-template-columns: 18px 18px 14px; }
.picked { background: #dceaf1; outline: 1px solid #b9cfda; }
.aa b { font-family: "Liberation Serif", serif; font-size: 11px; color: #de6a3b; }
.aa .sm { font-size: 7px; }
.shades { display: grid; grid-template: repeat(2, 21px) / repeat(3, 21px); place-items: center; padding-left: 3px; }
.shades svg { width: 14px; height: 14px; }
.shades .picked { width: 20px; height: 20px; padding: 3px; }
.rim { stroke: #b5762c; }
.styles { padding: 1px 1px; }
.styles label { display: flex; align-items: center; gap: 3px; height: 12px; padding-left: 2px; }
.styles b { font: italic bold 11px/12px "Liberation Serif", serif; color: #de6a3b; }
.styles small { font-size: 6px; vertical-align: 3px; color: #444; }
.styles select {
  appearance: none; width: 94px; height: 14px; border: 1px solid #b5b8ba;
  background: linear-gradient(45deg, transparent 50%, #666 50%) right 6px center / 2px 2px no-repeat, linear-gradient(-45deg, transparent 50%, #666 50%) right 4px center / 2px 2px no-repeat, #fff;
}

.work { flex: 1; display: flex; min-height: 0; font-family: "Open Sans", "Noto Sans", sans-serif; line-height: 12px; }
.tree { width: 194px; border-right: 1px solid #aab7be; border-top: 1px solid #b3d4e2; }
.bar { display: flex; align-items: center; gap: 3px; color: #fff; background: #00698e; }
.bar h2 { flex: 1; }
.tree .bar { width: 190px; height: 11px; padding: 0 3px 0 8px; }
.tree .bar h2 { margin-left: -1px; }
.bar svg { width: 8px; height: 8px; }
.tree li { display: grid; grid-template-columns: 12px 14px 14px auto; justify-content: start; align-items: center; justify-items: center; height: 12px; padding-left: 8px; white-space: nowrap; }
.tree li span { padding-left: 1px; }
.tree li svg { width: 10px; height: 10px; }
.tree li.l0 { padding-left: 0; grid-template-columns: 10px 12px 14px auto; }
.tree li.l2 { padding-left: 23px; }
.dim { color: #858585; }
.tri { width: 0; height: 0; border: 2px solid transparent; border-left: 3px solid #444; border-right: 0; }
.tri.dn { border: 2px solid transparent; border-top: 3px solid #333; border-bottom: 0; }
.tree .mode { grid-template-columns: 14px 122px; }
.mode b { display: flex; justify-content: space-between; align-items: center; width: 100%; height: 10px; padding: 0 6px 0 3px; font-weight: normal; background: #ffd48a; }
.box { width: 6px; height: 6px; border: 1px solid #fff; }

.docarea { flex: 1; min-width: 0; display: flex; flex-direction: column; }
.doctabs { display: flex; justify-content: space-between; height: 21px; border-bottom: 1px solid #9cc5dc; padding: 2px 3px 0; }
.doctab { display: flex; align-items: center; gap: 3px; width: 74px; padding: 0 2px 0 11px; color: #fff; background: #00698b; text-align: left; }
.doctab span { flex: 1; }
.doctab svg { width: 9px; height: 9px; }
.docnav { display: flex; align-items: center; gap: 3px; font: 8px/8px "DejaVu Sans", sans-serif; color: #222; }
.docnav svg { width: 9px; height: 9px; }
.canvas { position: relative; flex: 1; min-height: 0; }
.model { width: 100%; height: auto; }
.edge, .cells { stroke: #373b3e; stroke-width: 0.8; stroke-linejoin: round; }
.cells { stroke-width: 2; fill: url(#wall); }
.cells .hole { fill: #fff; }
.cells .post { fill: none; stroke: #383c3f; }
.plane { fill: none; stroke: #5b5555; stroke-width: 0.8; }
.axis { font: 10px "Liberation Sans", sans-serif; }
.facets { font: 6px "Open Sans", sans-serif; fill: #555; }
.float { position: absolute; }
.panel { left: 1px; top: 1px; width: 150px; border: 1px solid #8d9cae; border-top: 0; background: #fff; }
.panel .bar { height: 11px; padding: 0 4px 0 3px; }
.finish { display: flex; justify-content: flex-end; padding: 5px 2px 0; }
.finish button { width: 49px; height: 12px; line-height: 10px; border: 1px solid #bbb; background: #cdcdcd; color: #858585; }
.opts { display: grid; grid-template-columns: 49px repeat(4, 21px); gap: 2px; align-items: center; padding: 6px 0 2px 5px; }
.opts.first { padding: 9px 0 8px 5px; }
.opts.first span { color: #aaa; }
.opts.last { padding: 2px 0 8px 5px; }
.opts button { height: 21px; display: grid; place-items: center; background: #ccc; border: 1px solid #dcdcdc; }
.opts svg { width: 18px; height: 18px; }
.opts .sel { background: #c8dcf3; border-color: #397bbd; }
.opts .hov { background: #fff; border: 1px solid #4e93c5; }
.opts .lite { background: #e4e4e4; }
.sec { display: flex; align-items: center; gap: 5px; width: 100%; height: 17px; margin-bottom: 1px; padding-left: 5px; background: #cfe4eb; text-align: left; }
.sec.none { background: #f0f0f0; color: #8d8d8d; }
.sec.open { background: #7ebdca; color: #111; }
.otri { width: 6px; font: 7px/8px "DejaVu Sans", sans-serif; color: #222; }
.corner { width: 5px; height: 5px; margin-right: 1px; background: #111; clip-path: polygon(100% 0, 100% 100%, 0 100%); }
.suggest { left: 373px; top: 12px; width: 137px; height: 29px; border: 1px solid #b6bcc0; background: #fff; }
.suggest header { display: flex; justify-content: space-between; padding: 0 2px; font: 7px/12px "Open Sans", sans-serif; }
.suggest header svg { width: 9px; height: 9px; }
.suggest div { display: flex; gap: 1px; padding-left: 2px; }
.suggest div svg { width: 14px; height: 14px; padding: 1px; }
.suggest .hl { background: #c3e2ec; }
.mouse { left: 118px; top: 183px; width: 30px; height: 48px; }
.side { width: 17px; display: flex; flex-direction: column; align-items: center; padding-top: 4px; background: #fafafa; }
.side svg { width: 14px; height: 14px; }
.side span { writing-mode: vertical-rl; height: 96px; padding-top: 2px; font-size: 7px; }
.side div { display: flex; flex-direction: column; gap: 9px; margin-top: 5px; }

.status { height: 13px; display: flex; align-items: center; color: #fff; background: #00638a; font-family: "Open Sans", "Noto Sans", sans-serif; }
.status > span { flex: 1; padding-left: 366px; }
.status div { display: flex; align-items: center; gap: 5px; padding-right: 3px; }
.status svg { width: 10px; height: 10px; }
.pm { width: 9px; height: 9px; border-radius: 5px; background: #fff; color: #d7502c; line-height: 9px; text-align: center; font-size: 8px; }
.pm.less { margin-right: -4px; }
.status input { appearance: none; width: 76px; height: 9px; margin: 0; background: linear-gradient(#fff, #fff) center / 100% 1px no-repeat; }
.status input::-webkit-slider-thumb { appearance: none; width: 5px; height: 8px; background: #fff; border: 1px solid #bbb; }
```
